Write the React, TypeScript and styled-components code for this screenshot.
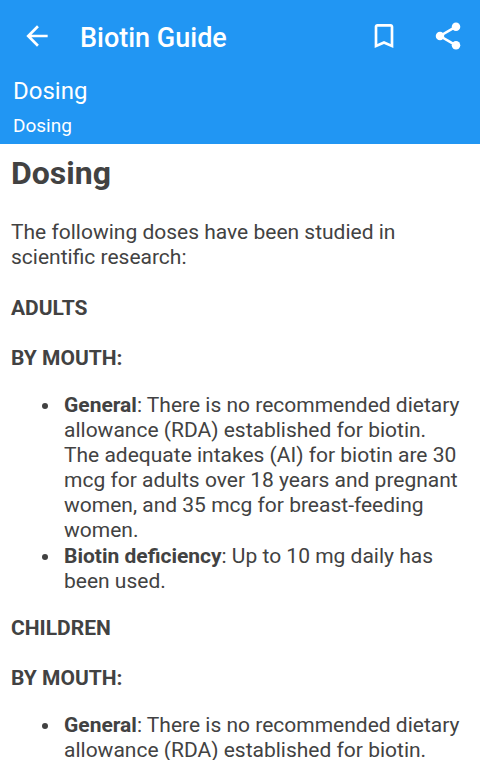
import React from 'react';
import styled, { createGlobalStyle } from 'styled-components';

const Global = createGlobalStyle`
  *, *::before, *::after { box-sizing: border-box; }
  body {
    margin: 0;
    background: #fff;
    color: #424242;
    font-family: Roboto, sans-serif;
    overflow: hidden;
  }
`;

const Screen = styled.div`
  height: 100vh;
  display: flex;
  flex-direction: column;
`;

const Header = styled.header`
  flex: none;
  background: #2196f3;
  color: #fff;
`;

const Toolbar = styled.div`
  display: flex;
  align-items: center;
  height: 72px;
  padding: 0 16px 0 21px;
`;

const IconButton = styled.button`
  display: flex;
  padding: 0;
  border: 0;
  background: none;
  color: inherit;
  cursor: pointer;

  svg {
    width: 32px;
    height: 32px;
    fill: currentColor;
  }
`;

const AppTitle = styled.h1`
  flex: 1;
  margin: 0 0 0 27px;
  padding-top: 4px;
  font-size: 27px;
  line-height: 32px;
  font-weight: 500;
`;

const Actions = styled.div`
  display: flex;
  gap: 32px;
`;

const Breadcrumb = styled.div`
  display: flex;
  flex-direction: column;
  padding: 2px 13px 6px;
`;

const Section = styled.span`
  font-size: 24px;
  line-height: 34px;
`;

const Topic = styled.span`
  margin-top: 6px;
  font-size: 19px;
  line-height: 24px;
`;

const Article = styled.main`
  flex: 1;
  min-height: 0;
  overflow: hidden;
  padding: 10px 11px 0;
  font-size: 21px;
  line-height: 25px;
`;

const ArticleTitle = styled.h2`
  margin: 0 0 28px;
  font-size: 32px;
  line-height: 38px;
  font-weight: 700;
`;

const Paragraph = styled.p`
  margin: 0 0 26px;
`;

const Label = styled.h3`
  margin: 0 0 25px;
  font-size: 21px;
  line-height: 25px;
  font-weight: 700;
`;

const Doses = styled.ul`
  margin: -3px 0 22px;
  padding: 0 5px 0 50px;
  list-style-type: disc;
`;

const Dose = styled.li`
  padding-left: 3px;

  & + & {
    margin-top: 1px;
  }
`;

export default function App() {
  return (
    <Screen>
      <Global />
      <Header>
        <Toolbar>
          <IconButton type="button" aria-label="Back">
            <svg viewBox="0 0 24 24"><path d="M20 11H7.83l5.59-5.59L12 4l-8 8 8 8 1.41-1.41L7.83 13H20v-2z" /></svg>
          </IconButton>
          <AppTitle>Biotin Guide</AppTitle>
          <Actions>
            <IconButton type="button" aria-label="Bookmark">
              <svg viewBox="0 0 24 24"><path d="M17 3H7c-1.1 0-1.99.9-1.99 2L5 21l7-3 7 3V5c0-1.1-.9-2-2-2zm0 15-5-2.18L7 18V5h10v13z" /></svg>
            </IconButton>
            <IconButton type="button" aria-label="Share">
              <svg viewBox="0 0 24 24">
                <path d="M18 5 6 12l12 7" fill="none" stroke="currentColor" strokeWidth="1.9" />
                <circle cx="18" cy="5" r="3.2" />
                <circle cx="6" cy="12" r="3.2" />
                <circle cx="18" cy="19" r="3.2" />
              </svg>
            </IconButton>
          </Actions>
        </Toolbar>
        <Breadcrumb>
          <Section>Dosing</Section>
          <Topic>Dosing</Topic>
        </Breadcrumb>
      </Header>
      <Article>
        <ArticleTitle>Dosing</ArticleTitle>
        <Paragraph>The following doses have been studied in scientific research:</Paragraph>
        <Label>ADULTS</Label>
        <Label>BY MOUTH:</Label>
        <Doses>
          <Dose>
            <strong>General</strong>: There is no recommended dietary allowance (RDA) established for biotin. The
            adequate intakes (AI) for biotin are 30 mcg for adults over 18 years and pregnant women, and 35 mcg for
            breast-feeding women.
          </Dose>
          <Dose><strong>Biotin deficiency</strong>: Up to 10 mg daily has been used.</Dose>
        </Doses>
        <Label>CHILDREN</Label>
        <Label>BY MOUTH:</Label>
        <Doses>
          <Dose>
            <strong>General</strong>: There is no recommended dietary allowance (RDA) established for biotin.
          </Dose>
        </Doses>
      </Article>
    </Screen>
  );
}
